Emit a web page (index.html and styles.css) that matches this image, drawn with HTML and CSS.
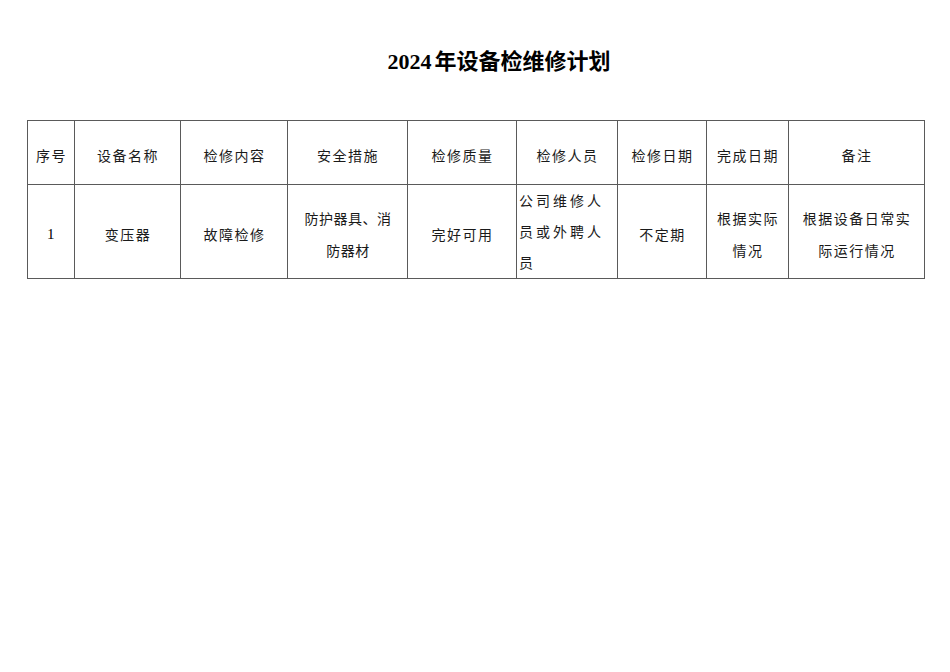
FILE: index.html
```html
<!DOCTYPE html>
<html lang="zh-CN">
<head>
<meta charset="utf-8">
<title>2024年设备检维修计划</title>
<link rel="stylesheet" href="styles.css">
</head>
<body>
<div class="page">
  <h1 class="title"><span class="num">2024</span>年设备检维修计划</h1>
  <table class="plan">
    <colgroup>
      <col class="c1"><col class="c2"><col class="c3"><col class="c4"><col class="c5"><col class="c6"><col class="c7"><col class="c8"><col class="c9">
    </colgroup>
    <tr class="head">
      <td>序号</td>
      <td>设备名称</td>
      <td>检修内容</td>
      <td>安全措施</td>
      <td>检修质量</td>
      <td>检修人员</td>
      <td>检修日期</td>
      <td>完成日期</td>
      <td>备注</td>
    </tr>
    <tr class="body">
      <td class="num">1</td>
      <td>变压器</td>
      <td>故障检修</td>
      <td class="tight">防护器具、消<br>防器材</td>
      <td>完好可用</td>
      <td class="wide">公司维修人<br>员或外聘人<br>员</td>
      <td>不定期</td>
      <td>根据实际<br>情况</td>
      <td>根据设备日常实<br>际运行情况</td>
    </tr>
  </table>
</div>
</body>
</html>
```
FILE: styles.css
```css
html, body {
  margin: 0;
  padding: 0;
  background: #ffffff;
}
body {
  font-family: "Noto Sans CJK SC", sans-serif;
  color: #1a1a1a;
}
.page {
  padding-top: 46px;
}
.title {
  margin: 0;
  padding-left: 48px;
  text-align: center;
  font-size: 22px;
  line-height: 32px;
  font-weight: bold;
  color: #000;
  font-family: "Liberation Serif", "Noto Sans CJK SC", serif;
}
.title .num {
  font-family: "Liberation Serif", serif;
  font-size: 22px;
  margin-right: 3px;
}
.plan {
  margin: 42px 0 0 27px;
  border-collapse: collapse;
  table-layout: fixed;
  width: 898px;
}
.plan td {
  border: 1px solid #5a5a5a;
  padding: 4px 0 0 1px;
  text-align: center;
  vertical-align: middle;
  font-size: 14px;
  letter-spacing: 1.5px;
  line-height: 32px;
  color: #1a1a1a;
}
.c1 { width: 47px; }
.c2 { width: 106px; }
.c3 { width: 107px; }
.c4 { width: 120px; }
.c5 { width: 109px; }
.c6 { width: 101px; }
.c7 { width: 89px; }
.c8 { width: 82px; }
.c9 { width: 136px; }
.head { height: 64px; }
.body { height: 94px; }
.plan td.num {
  font-family: "Liberation Serif", serif;
  font-size: 15px;
  color: #000;
}
.plan td.tight {
  letter-spacing: 0.5px;
}
.plan td.wide {
  text-align: left;
  letter-spacing: 3px;
  padding: 0 0 0 2px;
  line-height: 31px;
}
```
